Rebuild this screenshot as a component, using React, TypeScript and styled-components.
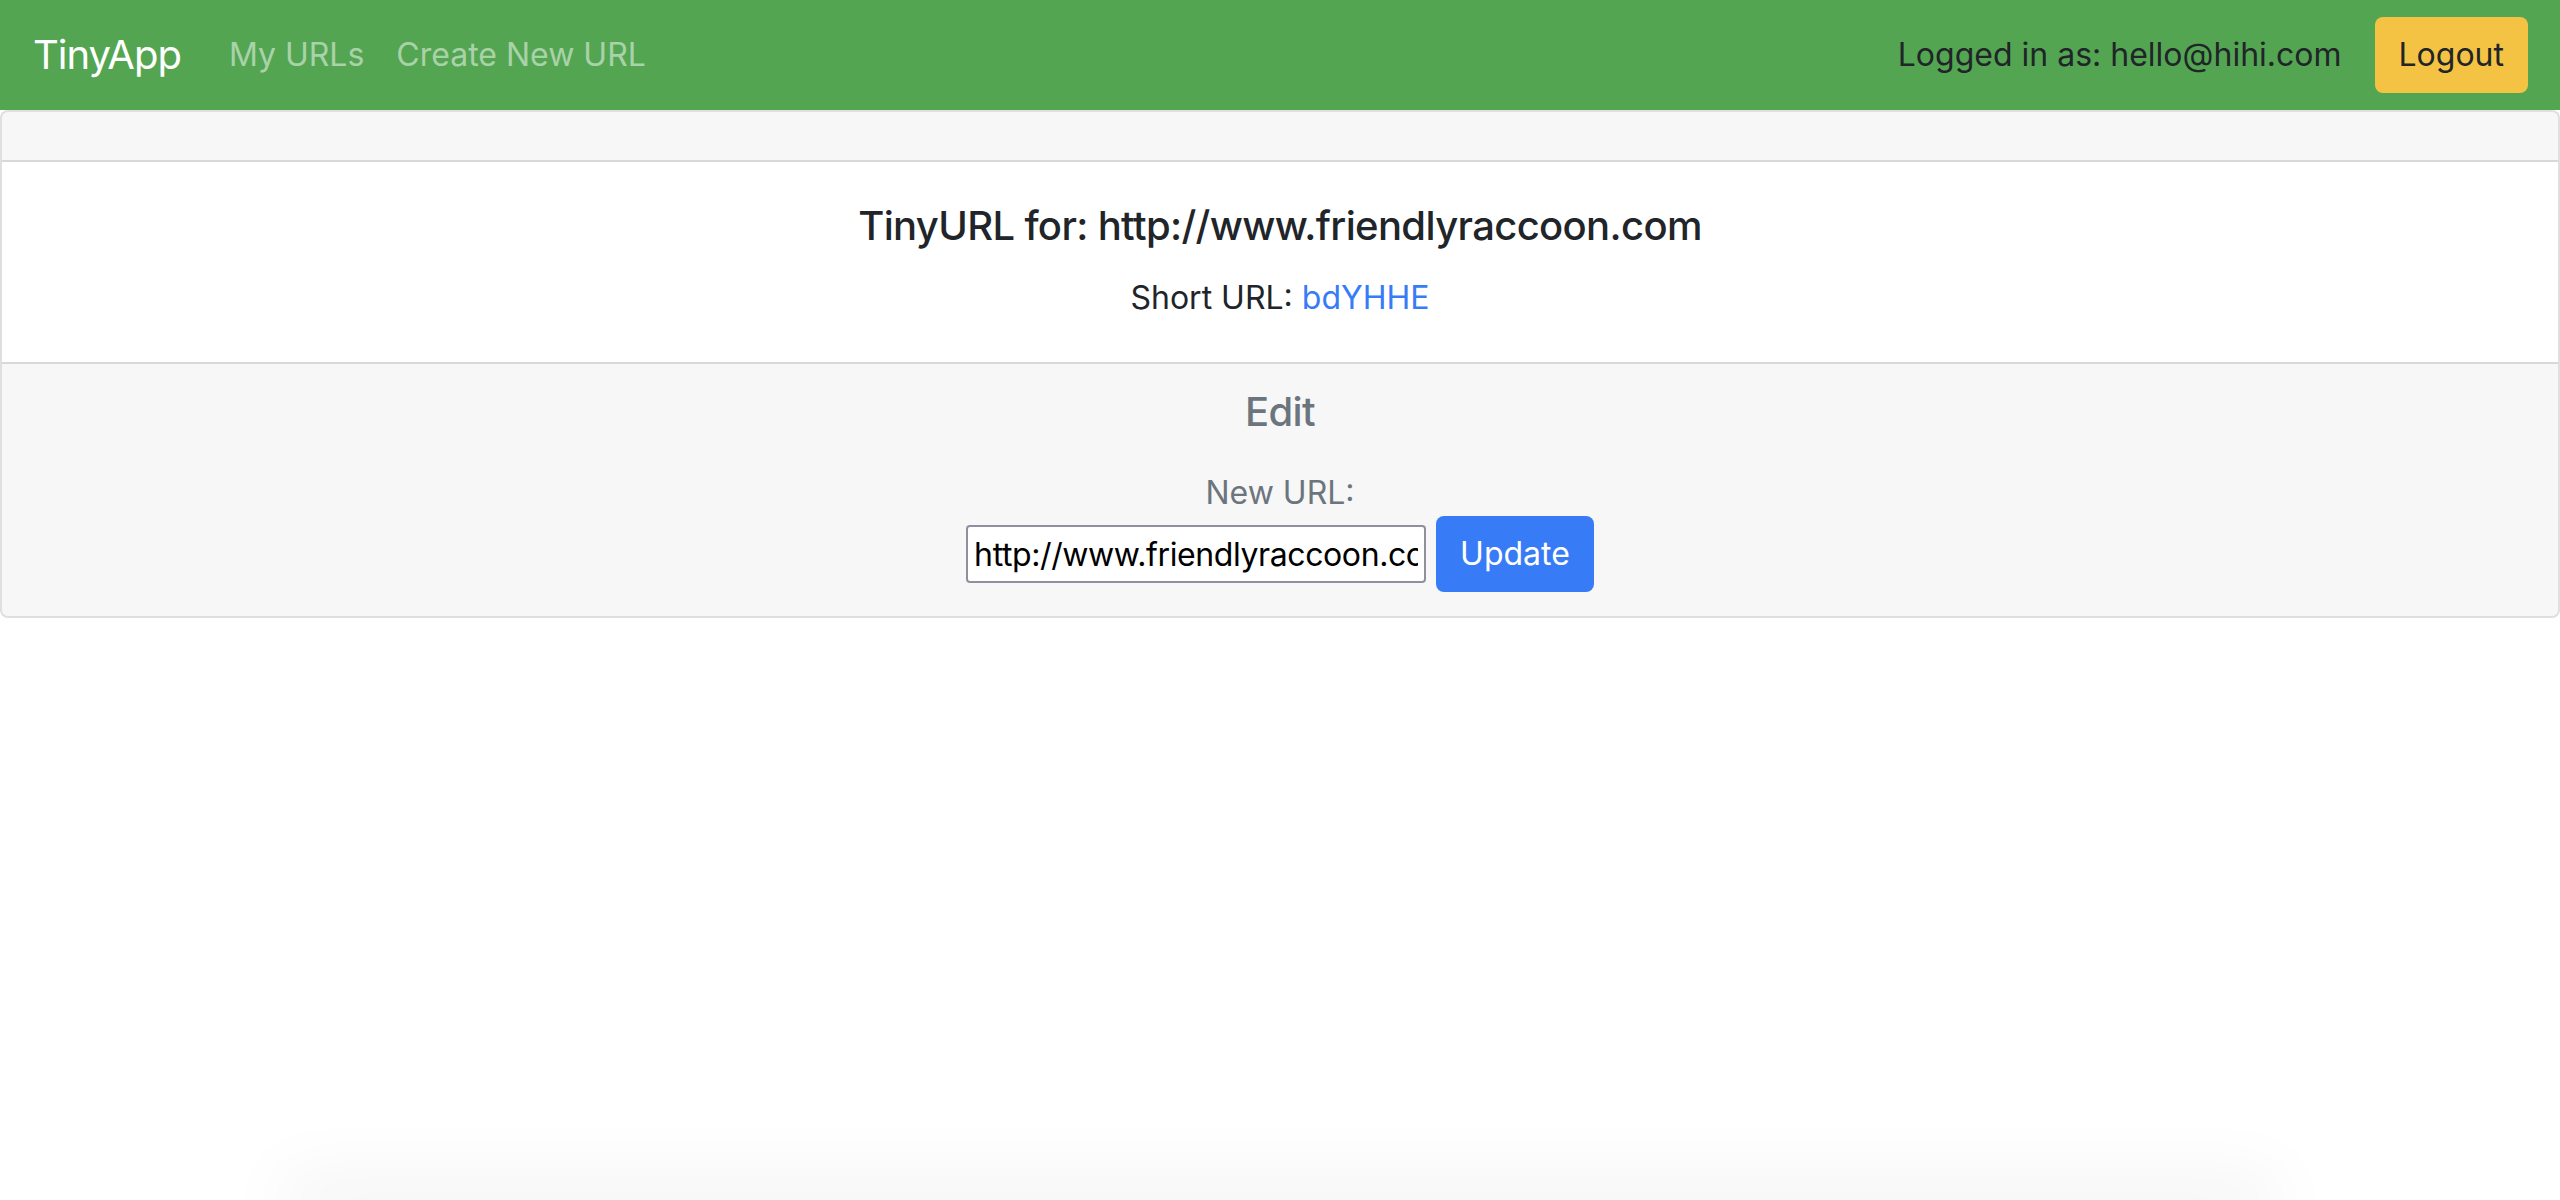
import React from "react";
import styled, { createGlobalStyle } from "styled-components";

const GlobalStyle = createGlobalStyle`
  html, body {
    margin: 0;
    padding: 0;
    background: #ffffff;
    overflow: hidden;
  }
  body {
    font-family: Inter, "Noto Sans", "Liberation Sans", sans-serif;
    color: #212529;
  }
  * { box-sizing: border-box; }
`;

const Page = styled.div`
  display: flex;
  flex-direction: column;
  min-height: 100vh;
`;

const Navbar = styled.nav`
  display: flex;
  align-items: center;
  height: 110px;
  padding: 0 32px 0 33px;
  background: #53a552;
`;

const Brand = styled.a`
  font-size: 40px;
  line-height: 60px;
  letter-spacing: -1px;
  color: #ffffff;
  margin-right: 32px;
  text-decoration: none;
`;

const NavLink = styled.a`
  font-size: 32px;
  line-height: 48px;
  padding: 0 16px;
  color: rgba(255, 255, 255, 0.5);
  text-decoration: none;
`;

const NavRight = styled.div`
  margin-left: auto;
  display: flex;
  align-items: center;
  gap: 33px;
`;

const UserText = styled.span`
  font-size: 32px;
  line-height: 48px;
  color: #212529;
`;

const Button = styled.button<{ $variant: "warning" | "primary" }>`
  height: 76px;
  padding: 0 24px;
  border: none;
  border-radius: 8px;
  font-family: inherit;
  font-size: 32px;
  line-height: 48px;
  cursor: pointer;
  background: ${(p) => (p.$variant === "warning" ? "#f4c343" : "#377cf6")};
  color: ${(p) => (p.$variant === "warning" ? "#212529" : "#ffffff")};
`;

const Card = styled.section`
  display: flex;
  flex-direction: column;
  border: 2px solid rgba(0, 0, 0, 0.125);
  border-radius: 8px;
  background: #ffffff;
  overflow: hidden;
`;

const CardHeader = styled.div`
  height: 50px;
  background: rgba(0, 0, 0, 0.03);
  border-bottom: 2px solid rgba(0, 0, 0, 0.125);
`;

const CardBody = styled.div`
  padding: 40px;
  text-align: center;
`;

const Title = styled.h5<{ $muted?: boolean }>`
  margin: 0 0 ${(p) => (p.$muted ? "33px" : "24px")};
  font-size: 40px;
  line-height: 48px;
  font-weight: 500;
  letter-spacing: -0.65px;
  color: ${(p) => (p.$muted ? "#6c757d" : "#212529")};
`;

const ShortLine = styled.p`
  margin: 0;
  font-size: 32px;
  line-height: 48px;
  color: #212529;
`;

const ShortLink = styled.a`
  color: #377cf6;
  text-decoration: none;
`;

const CardFooter = styled.div`
  padding: 24px 40px;
  text-align: center;
  background: rgba(0, 0, 0, 0.03);
  border-top: 2px solid rgba(0, 0, 0, 0.125);
`;

const Label = styled.label`
  display: block;
  font-size: 32px;
  line-height: 47px;
  color: #6c757d;
`;

const FormRow = styled.div`
  display: flex;
  justify-content: center;
  align-items: center;
  gap: 10px;
`;

const UrlInput = styled.input`
  width: 460px;
  height: 58px;
  padding: 0 6px;
  border: 2px solid #8f8f9d;
  border-radius: 4px;
  background: #ffffff;
  font-family: inherit;
  font-size: 32px;
  letter-spacing: -0.4px;
  color: #000000;
  outline: none;
`;

const BottomShade = styled.div`
  margin: auto 300px 0;
  height: 0;
  box-shadow: 0 0 70px 16px rgba(0, 0, 0, 0.08);
`;

export default function App() {
  return (
    <>
      <GlobalStyle />
      <Page>
        <Navbar>
          <Brand href="#">TinyApp</Brand>
          <NavLink href="#">My URLs</NavLink>
          <NavLink href="#">Create New URL</NavLink>
          <NavRight>
            <UserText>Logged in as: hello@hihi.com</UserText>
            <Button $variant="warning">Logout</Button>
          </NavRight>
        </Navbar>
        <Card>
          <CardHeader />
          <CardBody>
            <Title>TinyURL for: http://www.friendlyraccoon.com</Title>
            <ShortLine>
              Short URL: <ShortLink href="#">bdYHHE</ShortLink>
            </ShortLine>
          </CardBody>
          <CardFooter>
            <Title $muted>Edit</Title>
            <Label htmlFor="longURL">New URL:</Label>
            <FormRow>
              <UrlInput
                id="longURL"
                type="text"
                defaultValue="http://www.friendlyraccoon.com"
              />
              <Button $variant="primary">Update</Button>
            </FormRow>
          </CardFooter>
        </Card>
        <BottomShade />
      </Page>
    </>
  );
}
